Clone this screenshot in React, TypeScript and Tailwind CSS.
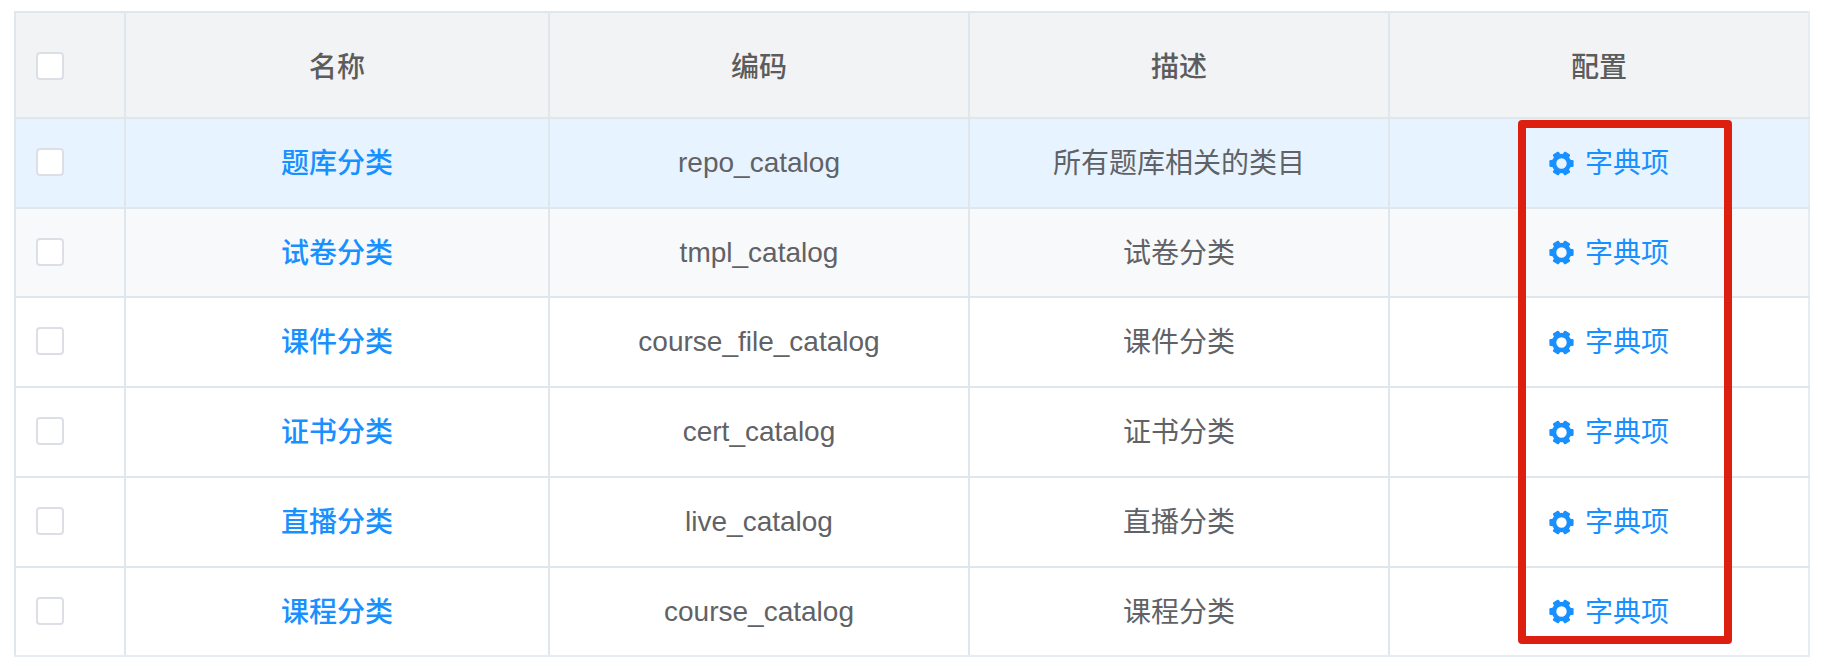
const rows = [
  { name: '题库分类', code: 'repo_catalog', desc: '所有题库相关的类目', bg: 'bg-[#e7f4ff]', h: 'h-[90px]' },
  { name: '试卷分类', code: 'tmpl_catalog', desc: '试卷分类', bg: 'bg-[#f7f9fb]', h: 'h-[89px]' },
  { name: '课件分类', code: 'course_file_catalog', desc: '课件分类', bg: 'bg-white', h: 'h-[90px]' },
  { name: '证书分类', code: 'cert_catalog', desc: '证书分类', bg: 'bg-white', h: 'h-[90px]' },
  { name: '直播分类', code: 'live_catalog', desc: '直播分类', bg: 'bg-white', h: 'h-[90px]' },
  { name: '课程分类', code: 'course_catalog', desc: '课程分类', bg: 'bg-white', h: 'h-[89px]' },
];

function GearIcon() {
  return (
    <svg width="25" height="25" viewBox="0 0 25 25" className="mb-[2px] shrink-0" fill="#1890ff">
      {[30, 90, 150, 210, 270, 330].map((deg) => (
        <rect key={deg} x="9" y="0.4" width="7" height="5" rx="1.2" transform={`rotate(${deg} 12.5 12.5)`} />
      ))}
      <circle cx="12.5" cy="12.5" r="7.5" fill="none" stroke="#1890ff" strokeWidth="4.6" />
    </svg>
  );
}

function Checkbox() {
  return <div className="h-7 w-7 rounded-[4px] border-2 border-[#dcdfe6] bg-white" />;
}

export default function App() {
  const cell = 'border-2 border-[#dfe6ec] text-center align-middle p-0';
  const head = `${cell} pt-[6px] font-medium text-[#5c5c5c]`;
  return (
    <div className="relative h-[666px] w-[1838px] overflow-hidden bg-white font-['Liberation_Sans','Noto_Sans_CJK_SC',sans-serif] text-[28px] text-[#606266]">
      <div className="pl-[14px] pt-[11px]">
        <table className="w-[1794px] table-fixed border-collapse">
          <colgroup>
            <col className="w-[110px]" />
            <col className="w-[424px]" />
            <col className="w-[420px]" />
            <col className="w-[420px]" />
            <col className="w-[420px]" />
          </colgroup>
          <thead>
            <tr className="h-[106px] bg-[#f2f3f5]">
              <th className={head}>
                <div className="mb-[4px] ml-[20px]"><Checkbox /></div>
              </th>
              <th className={head}>名称</th>
              <th className={head}>编码</th>
              <th className={head}>描述</th>
              <th className={`${head} border-r-[#e6ebf5]`}>配置</th>
            </tr>
          </thead>
          <tbody>
            {rows.map((row, i) => {
              const bottom = i === rows.length - 1 ? 'border-b-[#e6ebf5]' : '';
              return (
                <tr key={row.code} className={`${row.h} ${row.bg}`}>
                  <td className={`${cell} ${bottom}`}>
                    <div className="mb-[2px] ml-[20px]"><Checkbox /></div>
                  </td>
                  <td className={`${cell} ${bottom} pt-[2px] font-medium text-[#1890ff]`}>{row.name}</td>
                  <td className={`${cell} ${bottom}`}>{row.code}</td>
                  <td className={`${cell} ${bottom} pt-[2px]`}>{row.desc}</td>
                  <td className={`${cell} ${bottom} border-r-[#e6ebf5] pt-[2px]`}>
                    <div className="flex items-center justify-center gap-[11px] pl-[20px] text-[#1890ff]">
                      <GearIcon />
                      字典项
                    </div>
                  </td>
                </tr>
              );
            })}
          </tbody>
        </table>
      </div>
      {/* red annotation box drawn over the last column */}
      <div className="absolute left-[1518px] top-[120px] h-[524px] w-[214px] rounded-[4px] border-[8px] border-[#dc1f0e]" />
    </div>
  );
}
